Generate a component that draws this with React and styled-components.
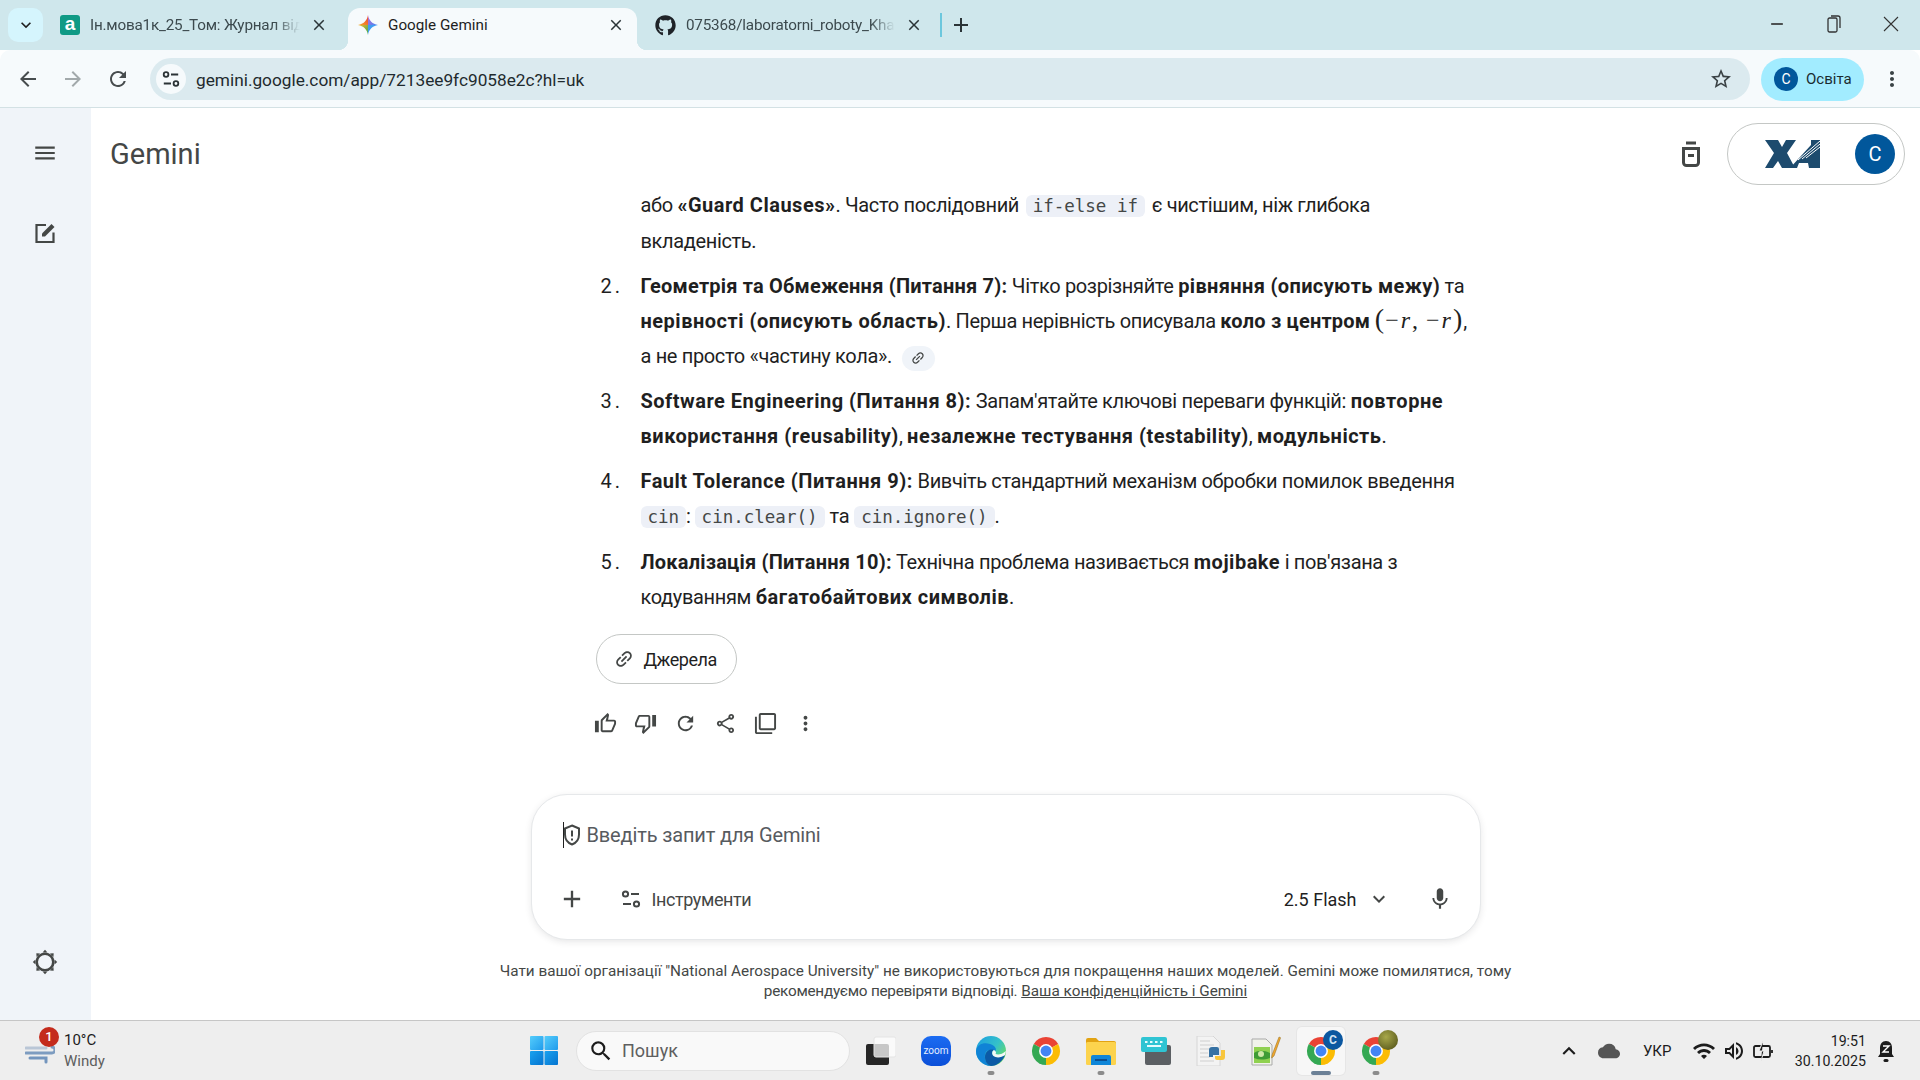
import React from 'react'
import styled, { createGlobalStyle } from 'styled-components'
import {
  MdOutlineThumbUp, MdOutlineThumbDown, MdRefresh, MdOutlineShare, MdFilterNone, MdMoreVert, MdLink,
  MdAdd, MdMic, MdKeyboardArrowDown, MdKeyboardArrowUp, MdMenu, MdArrowBack, MdArrowForward,
  MdStarBorder, MdWifi, MdOutlineVolumeUp, MdCloud, MdSearch, MdClose, MdRemove,
} from 'react-icons/md'
import { FaGithub } from 'react-icons/fa'

const GlobalStyle = createGlobalStyle`
  html, body { margin: 0; padding: 0; background: #fff; }
  * { box-sizing: border-box; }
  body { font-family: Roboto, "Noto Sans", sans-serif; color: #1f1f1f; }
`

const Page = styled.div`
  width: 1920px;
  height: 1080px;
  display: flex;
  flex-direction: column;
  overflow: hidden;
`

/* ---- browser chrome ---- */
const TabStrip = styled.div`
  height: 50px;
  background: #cfe7ec;
  display: flex;
  align-items: flex-end;
  padding-left: 8px;
`
const TabSearch = styled.div`
  width: 35px;
  height: 34px;
  margin-bottom: 8px;
  margin-right: 7px;
  border-radius: 10px;
  background: #d5f5fd;
  display: flex;
  align-items: center;
  justify-content: center;
  font-size: 20px;
`
const Tab = styled.div`
  position: relative;
  width: ${p => p.$width || 290}px;
  height: 42px;
  margin-right: 8px;
  padding: 0 12px 8px 10px;
  border-radius: 12px 12px 0 0;
  background: ${p => (p.$active ? '#f6fafc' : 'transparent')};
  display: flex;
  align-items: center;
  gap: 10px;
  ${p => p.$active && `
    &::before, &::after {
      content: '';
      position: absolute;
      bottom: 0;
      width: 10px;
      height: 10px;
    }
    &::before { left: -10px; background: radial-gradient(circle at 0 0, transparent 10px, #f6fafc 10.5px); }
    &::after { right: -10px; background: radial-gradient(circle at 100% 0, transparent 10px, #f6fafc 10.5px); }
  `}
`
const TabTitle = styled.span`
  flex: 1;
  font-size: 15.25px;
  color: ${p => (p.$active ? '#1f1f1f' : '#3c4a4e')};
  white-space: nowrap;
  overflow: hidden;
  ${p => !p.$active && `
    letter-spacing: -0.2px;
    -webkit-mask-image: linear-gradient(to right, #000 88%, transparent 100%);
    mask-image: linear-gradient(to right, #000 88%, transparent 100%);
  `}
`
const TabClose = styled(MdClose)`
  flex: none;
  font-size: 18px;
  color: #2a3437;
`
const AtutorIcon = styled.span`
  flex: none;
  width: 20px;
  height: 20px;
  border-radius: 3px;
  background: #0f9a85;
  color: #fff;
  font: 700 19px/18px "Liberation Sans", sans-serif;
  text-align: center;
`
const GithubIcon = styled(FaGithub)`
  flex: none;
  font-size: 21px;
  color: #1f2328;
`
const TabDivider = styled.div`
  width: 2px;
  height: 24px;
  margin: 0 7px 13px -3px;
  background: #6cc7dd;
`
const NewTab = styled(MdAdd)`
  font-size: 24px;
  margin-bottom: 13px;
  color: #2a3437;
`
const WindowControls = styled.div`
  margin-left: auto;
  align-self: flex-start;
  height: 48px;
  display: flex;
  margin-right: 1px;
`
const WindowButton = styled.div`
  width: 57px;
  display: flex;
  align-items: center;
  justify-content: center;
  font-size: 20px;
  color: #333;
`
const Toolbar = styled.div`
  height: 58px;
  background: #f6fafc;
  border-bottom: 1px solid #d3e1e4;
  border-radius: 10px 10px 0 0;
  padding: 1px 0 0 5px;
  display: flex;
  align-items: center;
`
const NavButton = styled.div`
  width: 45px;
  display: flex;
  justify-content: center;
  font-size: 24px;
  color: ${p => (p.$dim ? '#a2a9ab' : '#474c4e')};
`
const Address = styled.div`
  width: 1600px;
  height: 42px;
  margin-left: 10px;
  padding: 0 17px 0 6px;
  border-radius: 21px;
  background: #dbeaef;
  display: flex;
  align-items: center;
`
const SiteInfo = styled.div`
  width: 30px;
  height: 30px;
  border-radius: 50%;
  background: #f6fafc;
  display: flex;
  align-items: center;
  justify-content: center;
`
const Url = styled.span`
  margin-left: 10px;
  padding-top: 1px;
  flex: 1;
  font-size: 17.25px;
  color: #1f2a2e;
`
const StarIcon = styled(MdStarBorder)`
  font-size: 24px;
  color: #3a4245;
`
const ProfilePill = styled.div`
  width: 103px;
  height: 43px;
  margin-left: 11px;
  border-radius: 22px;
  background: #a2ecff;
  padding-left: 13px;
  display: flex;
  align-items: center;
  gap: 8px;
  font-size: 15px;
  color: #1b2b30;
`
const Avatar = styled.div`
  flex: none;
  width: ${p => p.$size}px;
  height: ${p => p.$size}px;
  border-radius: 50%;
  background: #01579b;
  color: #fff;
  font-size: ${p => p.$font}px;
  display: flex;
  align-items: center;
  justify-content: center;
`
const ToolbarMenu = styled(MdMoreVert)`
  margin-left: 16px;
  font-size: 24px;
  color: #3a4245;
`

/* ---- gemini page ---- */
const Body = styled.div`
  flex: 1;
  min-height: 0;
  display: flex;
`
const Sidebar = styled.aside`
  width: 91px;
  background: #f0f4f9;
  display: flex;
  flex-direction: column;
  align-items: center;
  color: #444746;
  padding: 32px 1px 45px 0;
`
const MenuIcon = styled(MdMenu)`
  font-size: 26px;
`
const NewChat = styled.svg`
  margin-top: 55px;
  width: 24px;
  height: 24px;
`
const Gear = styled.svg`
  margin-top: auto;
  width: 26px;
  height: 26px;
`
const Main = styled.main`
  flex: 1;
  min-width: 0;
  display: flex;
  flex-direction: column;
  align-items: center;
`
const Header = styled.header`
  width: 100%;
  height: 80px;
  padding: 15px 15px 0 19px;
  display: flex;
  align-items: flex-start;
`
const Brand = styled.div`
  font-size: 29px;
  line-height: 62px;
  color: #444746;
  flex: 1;
`
const TempChat = styled.svg`
  width: 24px;
  height: 26px;
  margin: 18px 24px 0 0;
`
const AccountPill = styled.div`
  width: 178px;
  height: 62px;
  border: 1px solid #c4c7c5;
  border-radius: 31px;
  padding: 0 9px 0 37px;
  display: flex;
  align-items: center;
  justify-content: space-between;
`
const Column = styled.div`
  width: 950px;
  flex: 1;
`
const List = styled.ol`
  margin: 0;
  padding: 0 0 0 70px;
  list-style: none;
  font-size: 20px;
  line-height: 35px;
  letter-spacing: -0.35px;
  color: #1f1f1f;
  white-space: nowrap;
`
const Item = styled.li`
  display: flex;
  margin-top: ${p => (p.$first ? 0 : 10)}px;
`
const Num = styled.span`
  flex: none;
  width: 40px;
  letter-spacing: 3px;
`
const Bold = styled.b`
  font-weight: 700;
  letter-spacing: ${p => p.$track ?? 0.5}px;
`
const Code = styled.code`
  font-family: "DejaVu Sans Mono", "Liberation Mono", monospace;
  font-size: 17.5px;
  letter-spacing: 0;
  padding: 1px 7px;
  margin: 0 ${p => p.$right || 0}px 0 ${p => p.$left || 0}px;
  border-radius: 6px;
  background: #edf0f7;
  color: #444746;
`
const MathText = styled.span`
  font-family: "Liberation Serif", serif;
  font-size: 24px;
  line-height: 0;
  letter-spacing: 1px;
  i { margin: 0 1px; }
`
const Paren = styled.span`
  font-size: 28px;
  line-height: 0;
`
const CiteChip = styled.span`
  display: inline-flex;
  align-items: center;
  justify-content: center;
  vertical-align: -3px;
  width: 33px;
  height: 25px;
  margin-left: 5px;
  border-radius: 13px;
  background: #f0f4f9;
  color: #444746;
`
const LinkIcon = styled(MdLink)`
  font-size: ${p => p.$size}px;
  transform: rotate(-45deg);
`
const SourcesButton = styled.div`
  width: 141px;
  height: 50px;
  margin: 19px 0 0 65px;
  border: 1px solid #c4c7c5;
  border-radius: 25px;
  display: flex;
  align-items: center;
  gap: 9px;
  padding-left: 16px;
  font-size: 18px;
  letter-spacing: -0.45px;
  color: #1f1f1f;
  svg { color: #444746; }
`
const Actions = styled.div`
  height: 40px;
  margin: 19px 0 0 55px;
  display: flex;
  align-items: center;
  color: #444746;
  font-size: 23px;
`
const ActionSlot = styled.div`
  width: 40px;
  display: flex;
  justify-content: center;
`
const InputBox = styled.div`
  flex: none;
  width: 950px;
  height: 146px;
  border: 1px solid #e6e8ea;
  border-radius: 36px;
  background: #fff;
  box-shadow: 0 2px 8px -2px rgba(32, 33, 36, 0.16);
  padding: 26px 27px 0 31px;
  display: flex;
  flex-direction: column;
`
const Prompt = styled.div`
  display: flex;
  align-items: center;
  height: 28px;
  font-size: 20px;
  letter-spacing: -0.15px;
  color: #575b5f;
`
const Caret = styled.span`
  width: 1px;
  height: 26px;
  background: #1f1f1f;
  margin-right: -1px;
`
const ShieldIcon = styled.svg`
  width: 18px;
  height: 22px;
  margin-right: 6px;
`
const InputRow = styled.div`
  margin-top: 36px;
  display: flex;
  align-items: center;
  color: #444746;
`
const PlusIcon = styled(MdAdd)`
  font-size: 28px;
  margin-left: -5px;
`
const ToolsButton = styled.div`
  margin-left: 35px;
  display: flex;
  align-items: center;
  gap: 11px;
  font-size: 18px;
  letter-spacing: -0.4px;
`
const ModelPicker = styled.div`
  margin-left: auto;
  display: flex;
  align-items: center;
  gap: 10px;
  font-size: 18px;
  color: #1f1f1f;
  svg { font-size: 24px; color: #444746; }
`
const MicIcon = styled(MdMic)`
  margin-left: 36px;
  font-size: 26px;
`
const Disclaimer = styled.p`
  flex: none;
  margin: 21px 0 19px;
  font-size: 15.3px;
  line-height: 20px;
  text-align: center;
  color: #444746;
  white-space: nowrap;
  a { color: #444746; text-decoration: underline; }
`
const DisclaimerLead = styled.span`
  letter-spacing: -0.25px;
`

/* ---- windows taskbar ---- */
const Taskbar = styled.footer`
  height: 60px;
  background: #eeeeee;
  border-top: 1px solid #c6c6c6;
  display: flex;
  align-items: center;
`
const Weather = styled.div`
  position: relative;
  width: 520px;
  padding-left: 25px;
  display: flex;
  align-items: center;
  gap: 9px;
`
const WeatherBadge = styled.span`
  position: absolute;
  left: 39px;
  top: -3px;
  width: 20px;
  height: 20px;
  border-radius: 50%;
  background: #c42b1c;
  color: #fff;
  font-size: 13px;
  font-weight: 500;
  line-height: 20px;
  text-align: center;
`
const WeatherText = styled.div`
  font-size: 15px;
  line-height: 21px;
  color: #1c1c1c;
  span { display: block; color: #5d5d5d; }
`
const Slot = styled.div`
  position: relative;
  flex: none;
  width: 48px;
  height: 48px;
  border-radius: 5px;
  display: flex;
  align-items: center;
  justify-content: center;
  ${p => p.$active && `
    background: #f7f7f7;
    box-shadow: 0 0 0 1px #e6e6e6;
  `}
`
const Indicator = styled.span`
  position: absolute;
  left: 50%;
  bottom: 0;
  transform: translateX(-50%);
  width: ${p => (p.$wide ? 20 : 7)}px;
  height: 4px;
  border-radius: 2px;
  background: ${p => (p.$wide ? '#6b8096' : '#8b8b8b')};
`
const IconBadge = styled.span`
  position: absolute;
  right: 2px;
  top: 3px;
  width: 20px;
  height: 20px;
  border-radius: 50%;
  background: ${p => p.$bg};
  color: #cfe2f2;
  font-size: 12px;
  font-weight: 700;
  line-height: 20px;
  text-align: center;
`
const SearchBox = styled.div`
  flex: none;
  width: 274px;
  height: 40px;
  margin: 0 7px 0 8px;
  border: 1px solid #e2e2e2;
  border-radius: 20px;
  background: #f9f9f9;
  display: flex;
  align-items: center;
  gap: 8px;
  padding-left: 11px;
  font-size: 18px;
  color: #5f5f5f;
  svg { font-size: 26px; color: #1c1c1c; }
`
const AppSlots = styled.div`
  display: flex;
  gap: 7px;
`
const ZoomIcon = styled.div`
  width: 30px;
  height: 30px;
  border-radius: 10px;
  background: linear-gradient(#1c6cf2, #0b4fd8);
  color: #e6efff;
  font-size: 10px;
  line-height: 30px;
  text-align: center;
`
const Tray = styled.div`
  margin-left: auto;
  padding-right: 25px;
  display: flex;
  align-items: center;
  color: #1c1c1c;
`
const TrayIcon = styled.div`
  display: flex;
  justify-content: center;
  width: ${p => p.$w}px;
  margin-left: ${p => p.$ml || 0}px;
  font-size: ${p => p.$font || 24}px;
  color: ${p => p.$color || '#1c1c1c'};
`
const Lang = styled.span`
  width: 48px;
  margin: 0 7.5px;
  text-align: center;
  font-size: 15px;
`
const Clock = styled.div`
  margin: 0 11px 0 18px;
  font-size: 14.2px;
  line-height: 20px;
  text-align: right;
`

/* ---- drawn icons ---- */
const Tune = ({ size = 20, color = '#444746' }) => (
  <svg width={size} height={size} viewBox="0 0 20 20" fill="none" stroke={color} strokeWidth="2">
    <circle cx="4.5" cy="5" r="2.6" />
    <path d="M10 5h8M2 15h8" />
    <circle cx="15.5" cy="15" r="2.6" />
  </svg>
)

const Spark = () => (
  <svg width="20" height="20" viewBox="0 0 20 20" style={{ flex: 'none' }}>
    <defs>
      <linearGradient id="sparkLeft" x1="0" y1="0" x2="1" y2="1">
        <stop offset="0" stopColor="#f7b52c" />
        <stop offset="1" stopColor="#35a853" />
      </linearGradient>
      <linearGradient id="sparkTop" x1="0" y1="1" x2="1" y2="0">
        <stop offset="0" stopColor="#f9a825" />
        <stop offset="1" stopColor="#ea4335" />
      </linearGradient>
      <linearGradient id="sparkRight" x1="0" y1="0" x2="1" y2="1">
        <stop offset="0" stopColor="#c46bd0" />
        <stop offset="1" stopColor="#4285f4" />
      </linearGradient>
    </defs>
    <path d="M10 0C9.2 5.5 5.5 9.2 0 10L10 10Z" fill="url(#sparkTop)" />
    <path d="M10 0C10.8 5.5 14.5 9.2 20 10L10 10Z" fill="url(#sparkRight)" />
    <path d="M20 10C14.5 10.8 10.8 14.5 10 20L10 10Z" fill="#3f9cf2" />
    <path d="M0 10C5.5 10.8 9.2 14.5 10 20L10 10Z" fill="url(#sparkLeft)" />
  </svg>
)

const ChromeIcon = () => (
  <svg width="30" height="30" viewBox="0 0 32 32">
    <path d="M16 16L3.01 8.5A15 15 0 0 1 28.99 8.5Z" fill="#ea4335" />
    <path d="M16 16L28.99 8.5A15 15 0 0 1 16 31Z" fill="#fbbc04" />
    <path d="M16 16L16 31A15 15 0 0 1 3.01 8.5Z" fill="#34a853" />
    <circle cx="16" cy="16" r="7.4" fill="#fff" />
    <circle cx="16" cy="16" r="5.8" fill="#4285f4" />
  </svg>
)

const EdgeIcon = () => (
  <svg width="30" height="30" viewBox="0 0 30 30">
    <defs>
      <linearGradient id="edgeTop" x1="0" y1="0" x2="1" y2="0.7">
        <stop offset="0" stopColor="#1b9de2" />
        <stop offset="0.6" stopColor="#35c1c9" />
        <stop offset="1" stopColor="#6bdc5f" />
      </linearGradient>
    </defs>
    <circle cx="15" cy="15" r="15" fill="url(#edgeTop)" />
    <path d="M0 15C1 8 8 6 14 8C20 10 21 14 19 15C14 12 8 14 9 22C9.5 26 12 29 15 30C7 30 0 23 0 15Z" fill="#1083d6" />
    <path d="M9 21C9 15 14 12.5 18 14C16 15 15 18 18 20C21 22 25 21 29 19C27 25 21 30 15 30C11 29 9 25 9 21Z" fill="#0c5aa6" />
    <path d="M18 14C20 15 20.5 17 19.5 18C22 19 26 18.5 30 15L29 19C25 22 20 22 17.5 20C15.5 18 16 15 18 14Z" fill="#f3f8f6" />
  </svg>
)

const FolderIcon = () => (
  <svg width="30" height="28" viewBox="0 0 30 28">
    <path d="M0 3a2 2 0 0 1 2-2h8l3 3h15a2 2 0 0 1 2 2v4H0Z" fill="#e2a312" />
    <rect y="5" width="30" height="23" rx="1.5" fill="#fcd34d" />
    <path d="M5 28v-8a2 2 0 0 1 2-2h16a2 2 0 0 1 2 2v8Z" fill="#0f86d8" />
    <rect x="9" y="22" width="12" height="2" fill="#0a4f91" />
  </svg>
)

const KeyboardIcon = () => (
  <svg width="30" height="28" viewBox="0 0 30 28">
    <rect x="4" y="8" width="26" height="20" rx="2" fill="#5b5f63" />
    <rect width="26" height="15" rx="2" fill="#2fc4d3" />
    <g fill="#e8fbfd">
      <rect x="4" y="4" width="2.5" height="2" /><rect x="9" y="4" width="2.5" height="2" />
      <rect x="14" y="4" width="2.5" height="2" /><rect x="19" y="4" width="2.5" height="2" />
      <rect x="6" y="8" width="14" height="2" />
    </g>
  </svg>
)

const PythonFileIcon = () => (
  <svg width="30" height="30" viewBox="0 0 30 30">
    <path d="M1 0h16l7 7v23H1Z" fill="#f3f3f3" stroke="#d6d6d6" />
    <g stroke="#cfcfcf" strokeWidth="1.2">
      <path d="M4 5h10M4 9h14M4 13h10M4 17h8M4 21h10M4 25h14" />
    </g>
    <path d="M13 14a3 3 0 0 1 3-3h5a2 2 0 0 1 2 2v6h-6v2h-4Z" fill="#3672a4" />
    <path d="M29 14v7a3 3 0 0 1-3 3h-5a2 2 0 0 1-2-2v-2h6v-6Z" fill="#f8c63d" />
  </svg>
)

const NotepadIcon = () => (
  <svg width="30" height="30" viewBox="0 0 30 30">
    <path d="M1 3h14l6 6v20H1Z" fill="#f1f3ea" stroke="#a9a9a9" />
    <rect x="3" y="11" width="16" height="16" fill="#8fd14f" />
    <path d="M3 17c4-3 10-3 16 0v5c-6 2-11 2-16 0Z" fill="#3f9c35" />
    <circle cx="10" cy="18" r="3" fill="#cfe8a8" />
    <path d="M21 19L28 1l1.6.7L23 20l-2.4 2Z" fill="#f2a72e" stroke="#8c6a1a" strokeWidth=".5" />
  </svg>
)

const TaskViewIcon = () => (
  <svg width="30" height="30" viewBox="0 0 30 30">
    <rect y="8" width="23" height="21" rx="2" fill="#262626" />
    <rect x="8" y="1" width="22" height="20" rx="2" fill="#fdfdfd" fillOpacity="0.75" stroke="#e4e4e4" />
  </svg>
)

const StartIcon = () => (
  <svg width="28" height="29" viewBox="0 0 28 29">
    <defs>
      <linearGradient id="winTop" x1="0" y1="0" x2="1" y2="1">
        <stop offset="0" stopColor="#55cdfb" />
        <stop offset="1" stopColor="#1f9bec" />
      </linearGradient>
      <linearGradient id="winBottom" x1="0" y1="0" x2="1" y2="1">
        <stop offset="0" stopColor="#1aa2ef" />
        <stop offset="1" stopColor="#0574d0" />
      </linearGradient>
    </defs>
    <rect width="13.5" height="14" rx="1" fill="url(#winTop)" />
    <rect x="14.5" width="13.5" height="14" rx="1" fill="url(#winTop)" />
    <rect y="15" width="13.5" height="14" rx="1" fill="url(#winBottom)" />
    <rect x="14.5" y="15" width="13.5" height="14" rx="1" fill="url(#winBottom)" />
  </svg>
)

const WindIcon = () => (
  <svg width="30" height="26" viewBox="0 0 30 26" fill="none" strokeLinecap="round">
    <path d="M1 10h20" stroke="#b9c6d6" strokeWidth="3" />
    <path d="M1 15h26a3 3 0 0 0 0-6" stroke="#7d9cc0" strokeWidth="3" />
    <path d="M5 20h16v4" stroke="#7395bd" strokeWidth="3" />
  </svg>
)

const XaiLogo = () => (
  <svg width="56" height="30" viewBox="0 0 56 30">
    <g fill="#1d4b6e">
      <path d="M0 1h13l4 7 4-7h10l-9 13 8 15H17l-4-7-5 7H0l9-15Z" />
      <path d="M25 29L46 6V1h9v28H44l-1-5h-9l-2 5Z" />
    </g>
    <g stroke="#fff" strokeWidth="1">
      <path d="M33 21L55 2M37 20L55 5M41 19L55 8" />
    </g>
  </svg>
)

const GearIcon = () => (
  <Gear viewBox="0 0 26 26">
    <circle cx="13" cy="13" r="8.3" fill="none" stroke="#444746" strokeWidth="2.6" />
    {[0, 45, 90, 135, 180, 225, 270, 315].map(a => (
      <path key={a} d="M10.5 3.5L13 .8l2.5 2.7Z" fill="#444746" transform={`rotate(${a} 13 13)`} />
    ))}
  </Gear>
)

const App = () => {
  return (
    <Page>
      <GlobalStyle />
      <TabStrip>
        <TabSearch><MdKeyboardArrowDown /></TabSearch>
        <Tab>
          <AtutorIcon>a</AtutorIcon>
          <TabTitle>Ін.мова1к_25_Том: Журнал від</TabTitle>
          <TabClose />
        </Tab>
        <Tab $active $width={289}>
          <Spark />
          <TabTitle $active>Google Gemini</TabTitle>
          <TabClose />
        </Tab>
        <Tab>
          <GithubIcon />
          <TabTitle>075368/laboratorni_roboty_Kha</TabTitle>
          <TabClose />
        </Tab>
        <TabDivider />
        <NewTab />
        <WindowControls>
          <WindowButton><MdRemove /></WindowButton>
          <WindowButton>
            <svg width="14" height="18" viewBox="0 0 14 18" fill="none" stroke="#333" strokeWidth="1.3">
              <rect x="1" y="3" width="9" height="14" rx="1.5" />
              <path d="M4 1h7a2 2 0 0 1 2 2v10" />
            </svg>
          </WindowButton>
          <WindowButton>
            <svg width="16" height="16" viewBox="0 0 16 16" stroke="#333" strokeWidth="1.1"><path d="M1 1l14 14M15 1L1 15" /></svg>
          </WindowButton>
        </WindowControls>
      </TabStrip>

      <Toolbar>
        <NavButton><MdArrowBack /></NavButton>
        <NavButton $dim><MdArrowForward /></NavButton>
        <NavButton><MdRefresh /></NavButton>
        <Address>
          <SiteInfo><Tune size={18} color="#2b3336" /></SiteInfo>
          <Url>gemini.google.com/app/7213ee9fc9058e2c?hl=uk</Url>
          <StarIcon />
        </Address>
        <ProfilePill>
          <Avatar $size={24} $font={14}>C</Avatar>
          Освіта
        </ProfilePill>
        <ToolbarMenu />
      </Toolbar>

      <Body>
        <Sidebar>
          <MenuIcon />
          <NewChat viewBox="0 0 24 24" fill="none" stroke="#444746" strokeWidth="2.2">
            <path d="M13 4H3.5v17h17v-9.5" />
            <path d="M9 15.5v-3L18.5 3l3 3-9.5 9.5Z" fill="#444746" stroke="none" />
          </NewChat>
          <GearIcon />
        </Sidebar>

        <Main>
          <Header>
            <Brand>Gemini</Brand>
            <TempChat viewBox="0 0 24 26" fill="none" stroke="#444746" strokeWidth="3">
              <path d="M7 2h10" />
              <path d="M3 7.5h18" />
              <path d="M4.5 8v13.5a3 3 0 0 0 3 3h9a3 3 0 0 0 3-3V8" />
              <path d="M9 14.5h6" />
            </TempChat>
            <AccountPill>
              <XaiLogo />
              <Avatar $size={40} $font={20}>C</Avatar>
            </AccountPill>
          </Header>

          <Column>
            <List>
              <Item $first>
                <Num />
                <div>
                  або <Bold>«Guard Clauses»</Bold>. Часто послідовний <Code $left={2} $right={2}>if-else if</Code> є чистішим, ніж глибока<br />
                  вкладеність.
                </div>
              </Item>
              <Item>
                <Num>2.</Num>
                <div>
                  <Bold $track={0.2}>Геометрія та Обмеження (Питання 7):</Bold> Чітко розрізняйте <Bold $track={0.35}>рівняння (описують межу)</Bold> та<br />
                  <Bold>нерівності (описують область)</Bold>. Перша нерівність описувала <Bold $track={0.2}>коло з центром</Bold> <MathText><Paren>(</Paren>−<i>r</i>, −<i>r</i><Paren>)</Paren></MathText>,<br />
                  а не просто «частину кола». <CiteChip><LinkIcon $size={16} /></CiteChip>
                </div>
              </Item>
              <Item>
                <Num>3.</Num>
                <div>
                  <Bold>Software Engineering (Питання 8):</Bold> Запам'ятайте ключові переваги функцій: <Bold>повторне</Bold><br />
                  <Bold>використання (reusability)</Bold>, <Bold>незалежне тестування (testability)</Bold>, <Bold>модульність</Bold>.
                </div>
              </Item>
              <Item>
                <Num>4.</Num>
                <div>
                  <Bold>Fault Tolerance (Питання 9):</Bold> Вивчіть стандартний механізм обробки помилок введення<br />
                  <Code>cin</Code>:<Code $left={4} $right={5}>cin.clear()</Code>та<Code $left={5}>cin.ignore()</Code>.
                </div>
              </Item>
              <Item>
                <Num>5.</Num>
                <div>
                  <Bold $track={0.2}>Локалізація (Питання 10):</Bold> Технічна проблема називається <Bold>mojibake</Bold> і пов'язана з<br />
                  кодуванням <Bold>багатобайтових символів</Bold>.
                </div>
              </Item>
            </List>
            <SourcesButton><LinkIcon $size={22} />Джерела</SourcesButton>
            <Actions>
              <ActionSlot><MdOutlineThumbUp /></ActionSlot>
              <ActionSlot><MdOutlineThumbDown /></ActionSlot>
              <ActionSlot><MdRefresh /></ActionSlot>
              <ActionSlot><MdOutlineShare /></ActionSlot>
              <ActionSlot><MdFilterNone /></ActionSlot>
              <ActionSlot><MdMoreVert /></ActionSlot>
            </Actions>
          </Column>

          <InputBox>
            <Prompt>
              <Caret />
              <ShieldIcon viewBox="0 0 18 22" fill="none" stroke="#444746" strokeWidth="2">
                <path d="M9 1.5l7 3v6c0 5-3 8.5-7 10-4-1.5-7-5-7-10v-6Z" />
                <path d="M9 6.5v6M9 14.5v2" />
              </ShieldIcon>
              Введіть запит для Gemini
            </Prompt>
            <InputRow>
              <PlusIcon />
              <ToolsButton><Tune />Інструменти</ToolsButton>
              <ModelPicker>2.5 Flash <MdKeyboardArrowDown /></ModelPicker>
              <MicIcon />
            </InputRow>
          </InputBox>

          <Disclaimer>
            Чати вашої організації "National Aerospace University" не використовуються для покращення наших моделей. Gemini може помилятися, тому<br />
            <DisclaimerLead>рекомендуємо перевіряти відповіді.</DisclaimerLead> <a>Ваша конфіденційність і Gemini</a>
          </Disclaimer>
        </Main>
      </Body>

      <Taskbar>
        <Weather>
          <WindIcon />
          <WeatherBadge>1</WeatherBadge>
          <WeatherText>10°C<span>Windy</span></WeatherText>
        </Weather>
        <Slot><StartIcon /></Slot>
        <SearchBox><MdSearch />Пошук</SearchBox>
        <AppSlots>
          <Slot><TaskViewIcon /></Slot>
          <Slot><ZoomIcon>zoom</ZoomIcon></Slot>
          <Slot><EdgeIcon /><Indicator /></Slot>
          <Slot><ChromeIcon /></Slot>
          <Slot><FolderIcon /><Indicator /></Slot>
          <Slot><KeyboardIcon /></Slot>
          <Slot><PythonFileIcon /></Slot>
          <Slot><NotepadIcon /></Slot>
          <Slot $active><ChromeIcon /><IconBadge $bg="#0b57a0">C</IconBadge><Indicator $wide /></Slot>
          <Slot><ChromeIcon /><IconBadge $bg="radial-gradient(circle at 40% 35%, #a8a84a, #4a4a14)" /><Indicator /></Slot>
        </AppSlots>
        <Tray>
          <TrayIcon $w={30} $font={26}><MdKeyboardArrowUp /></TrayIcon>
          <TrayIcon $w={34} $ml={7.5} $font={22} $color="#555"><MdCloud /></TrayIcon>
          <Lang>УКР</Lang>
          <TrayIcon $w={30}><MdWifi /></TrayIcon>
          <TrayIcon $w={30}><MdOutlineVolumeUp /></TrayIcon>
          <TrayIcon $w={28}>
            <svg width="22" height="22" viewBox="0 0 22 22" fill="none" stroke="#1c1c1c" strokeWidth="1.8">
              <rect x="2" y="6" width="16" height="11" rx="1.5" />
              <path d="M20 10v3" />
              <path d="M11 1L7 11h5l-3 10" fill="#1c1c1c" stroke="#eee" strokeWidth="1" />
            </svg>
          </TrayIcon>
          <Clock>19:51<br />30.10.2025</Clock>
          <TrayIcon $w={18}>
            <svg width="18" height="24" viewBox="0 0 18 24">
              <path d="M9 2c4 0 6 3 6 7v6l2 3H1l2-3V9c0-4 2-7 6-7Z" fill="#1c1c1c" />
              <rect x="6.5" y="20" width="5" height="3" rx="1.5" fill="#1c1c1c" />
              <path d="M6 7h6l-6 6h6" fill="none" stroke="#fff" strokeWidth="1.4" />
            </svg>
          </TrayIcon>
        </Tray>
      </Taskbar>
    </Page>
  )
}

export default App
